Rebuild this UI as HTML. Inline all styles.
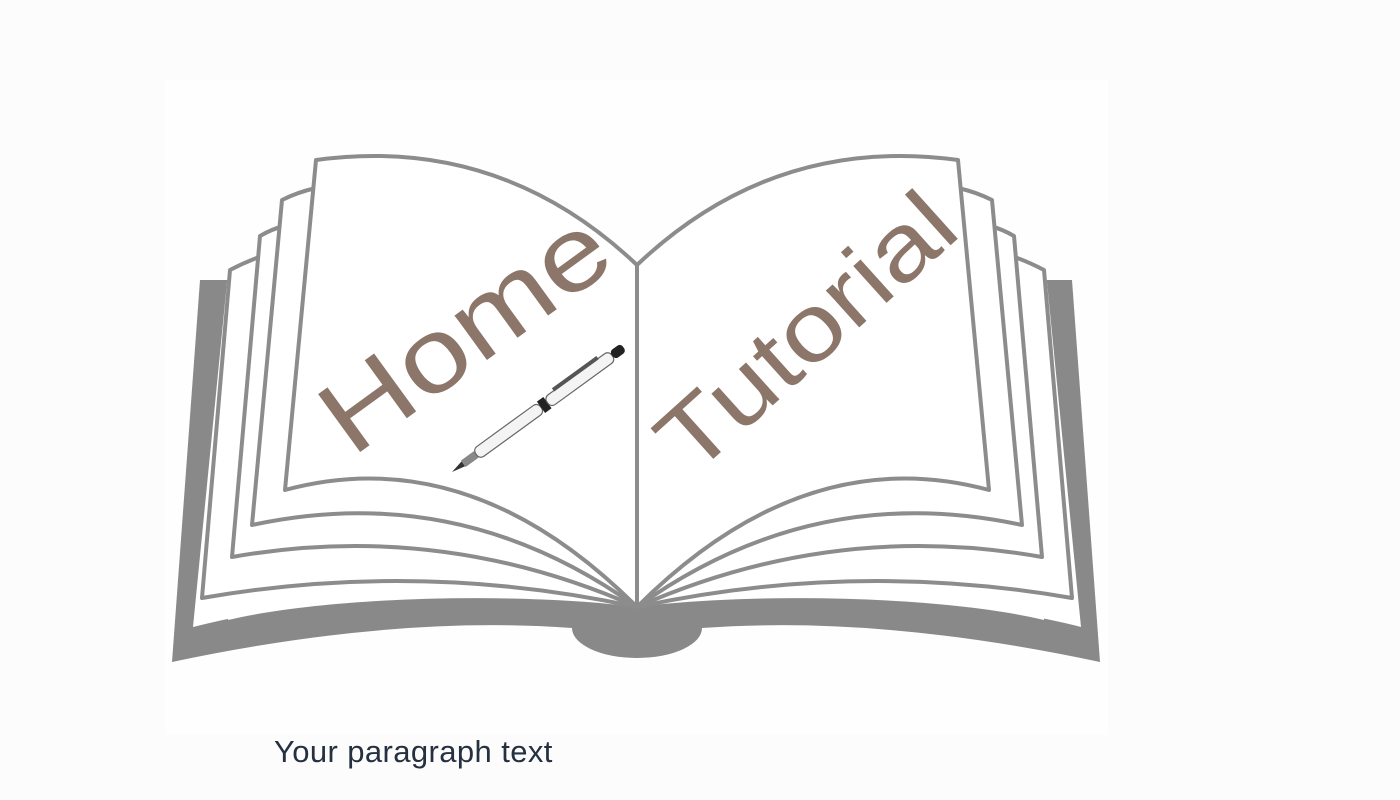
<!DOCTYPE html>
<html><head><meta charset="utf-8"><style>
html,body{margin:0;padding:0;background:#fcfcfc;width:1400px;height:800px;overflow:hidden}
svg{position:absolute;left:0;top:0}
</style></head><body>
<svg width="1400" height="800" viewBox="0 0 1400 800" xmlns="http://www.w3.org/2000/svg">
<rect x="165" y="80" width="943" height="655" fill="#fefefe"/>
<!-- cover -->
<path d="M200,280 L228,280 L228,620 C330,596 520,592 637,607 C754,592 944,596 1044,620 L1044,280 L1072,280 L1100,662 Q880,615 702,628 A65,30 0 0 1 572,628 Q394,615 172,662 Z" fill="#898989"/>
<g fill="#fff" stroke="#8c8c8c" stroke-width="4" stroke-linejoin="round">
<path d="M637,607 C520,590 330,592 193,627 L228,272 Q245,262 262,258 L637,300 Z" stroke="none"/>
<path d="M637,607 Q420,560 202,598 L230,270 Q245,262 262,256 L637,300 Z"/>
<path d="M637,607 Q440,520 232,557 L260,236 Q272,229 284,226 L637,290 Z"/>
<path d="M637,607 Q460,480 252,525 L282,200 Q298,192 316,188 L637,280 Z"/>
<path d="M637,607 Q470,440 285,490 L316,160 Q500,135 637,265 Z"/>
<path d="M637,607 C754,590 944,592 1081,627 L1046,272 Q1029,262 1012,258 L637,300 Z" stroke="none"/>
<path d="M637,607 Q854,560 1072,598 L1044,270 Q1029,262 1012,256 L637,300 Z"/>
<path d="M637,607 Q834,520 1042,557 L1014,236 Q1002,229 990,226 L637,290 Z"/>
<path d="M637,607 Q814,480 1022,525 L992,200 Q976,192 958,188 L637,280 Z"/>
<path d="M637,607 Q804,440 989,490 L958,160 Q774,135 637,265 Z"/>
</g>
<line x1="637" y1="265" x2="637" y2="607" stroke="#8c8c8c" stroke-width="3"/>
<text x="0" y="0" transform="translate(352,458) rotate(-36)" font-family="'Liberation Sans',sans-serif" font-size="104" fill="#8c7669" textLength="330" lengthAdjust="spacingAndGlyphs">Home</text>
<text x="0" y="0" transform="translate(692,478) rotate(-42)" font-family="'Liberation Sans',sans-serif" font-size="94" fill="#8c7669" textLength="365" lengthAdjust="spacingAndGlyphs">Tutorial</text>
<g transform="translate(452,472) rotate(-36)">
<path d="M0,0 L14,-3 L14,3 Z" fill="#333"/>
<rect x="14" y="-4" width="16" height="8" fill="#888"/>
<rect x="30" y="-6" width="80" height="12" rx="5" fill="#f4f4f4" stroke="#666" stroke-width="1.2"/>
<rect x="110" y="-7" width="8" height="14" fill="#222"/>
<rect x="118" y="-6" width="80" height="12" rx="5" fill="#f4f4f4" stroke="#666" stroke-width="1.2"/>
<rect x="198" y="-5" width="14" height="10" rx="4" fill="#222"/>
<rect x="130" y="-9" width="55" height="4" fill="#555"/>
</g>
</svg>
<div style="position:absolute;left:274px;top:734px;font-family:'Liberation Sans',sans-serif;font-size:31px;color:#253040;letter-spacing:0.4px">Your paragraph text</div>
</body></html>
